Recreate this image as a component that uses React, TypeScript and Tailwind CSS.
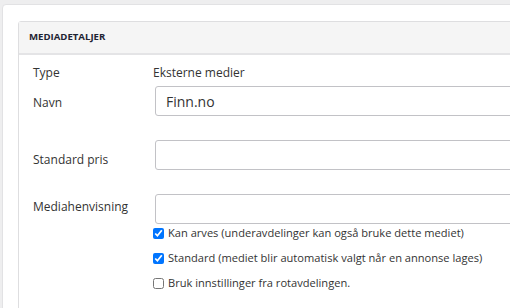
import React from "react";

const font = { fontFamily: '"Open Sans", "Noto Sans", Arial, sans-serif' };

function Field({ label, labelPad }: { label: string; labelPad: string }) {
  return (
    <>
      <div className={`${labelPad} text-[12px] leading-4 text-[#333]`}>{label}</div>
      <div className="pl-[2px]">
        <input
          type="text"
          className="h-[30px] w-[420px] rounded-[3px] border border-[#c2c2c6] bg-white px-[10px] text-[14px] text-[#333] outline-none"
        />
      </div>
    </>
  );
}

function Check({ checked, label }: { checked?: boolean; label: string }) {
  return (
    <label className="flex h-[25px] items-center gap-[4px] text-[11.1px] text-[#333]">
      <input type="checkbox" defaultChecked={checked} className="m-0 h-[11px] w-[11px]" />
      <span>{label}</span>
    </label>
  );
}

export default function App() {
  return (
    <div className="h-[308px] w-[510px] overflow-hidden bg-[#eeeeef] pl-[2px] pt-[4px]" style={font}>
      <div className="h-[360px] w-[560px] rounded-tl-[4px] border border-[#e2e2e4] bg-white pl-[15px] pt-[16px]">
        <div className="h-[340px] w-[560px] rounded-tl-[3px] border border-[#dedee0]">
          <div className="flex h-[33px] items-center border-b-2 border-[#e4e4e6] bg-[#f5f5f5] pl-[10px] text-[9.6px] font-bold text-[#1f2433]">
            MEDIADETALJER
          </div>
          <div className="grid grid-cols-[120px_1fr] pl-[14px] pt-[10px]">
            <div className="text-[12px] leading-4 text-[#333]">Type</div>
            <div className="text-[12px] leading-4 text-[#333]">Eksterne medier</div>

            <div className="col-span-2 h-[5px]" />
            <div className="pt-[9px] text-[12px] leading-4 text-[#333]">Navn</div>
            <div className="pl-[2px]">
              <input
                type="text"
                defaultValue="Finn.no"
                className="h-[30px] w-[420px] rounded-[3px] border border-[#c2c2c6] bg-white px-[10px] text-[14px] text-[#333] outline-none"
              />
            </div>

            <div className="col-span-2 h-[24px]" />
            <Field label="Standard pris" labelPad="pt-[12px]" />

            <div className="col-span-2 h-[24px]" />
            <Field label="Mediahenvisning" labelPad="pt-[5px]" />

            <div />
            <div className="-mt-[3px] flex flex-col">
              <Check checked label="Kan arves (underavdelinger kan også bruke dette mediet)" />
              <Check checked label="Standard (mediet blir automatisk valgt når en annonse lages)" />
              <Check label="Bruk innstillinger fra rotavdelingen." />
            </div>
          </div>
        </div>
      </div>
    </div>
  );
}
